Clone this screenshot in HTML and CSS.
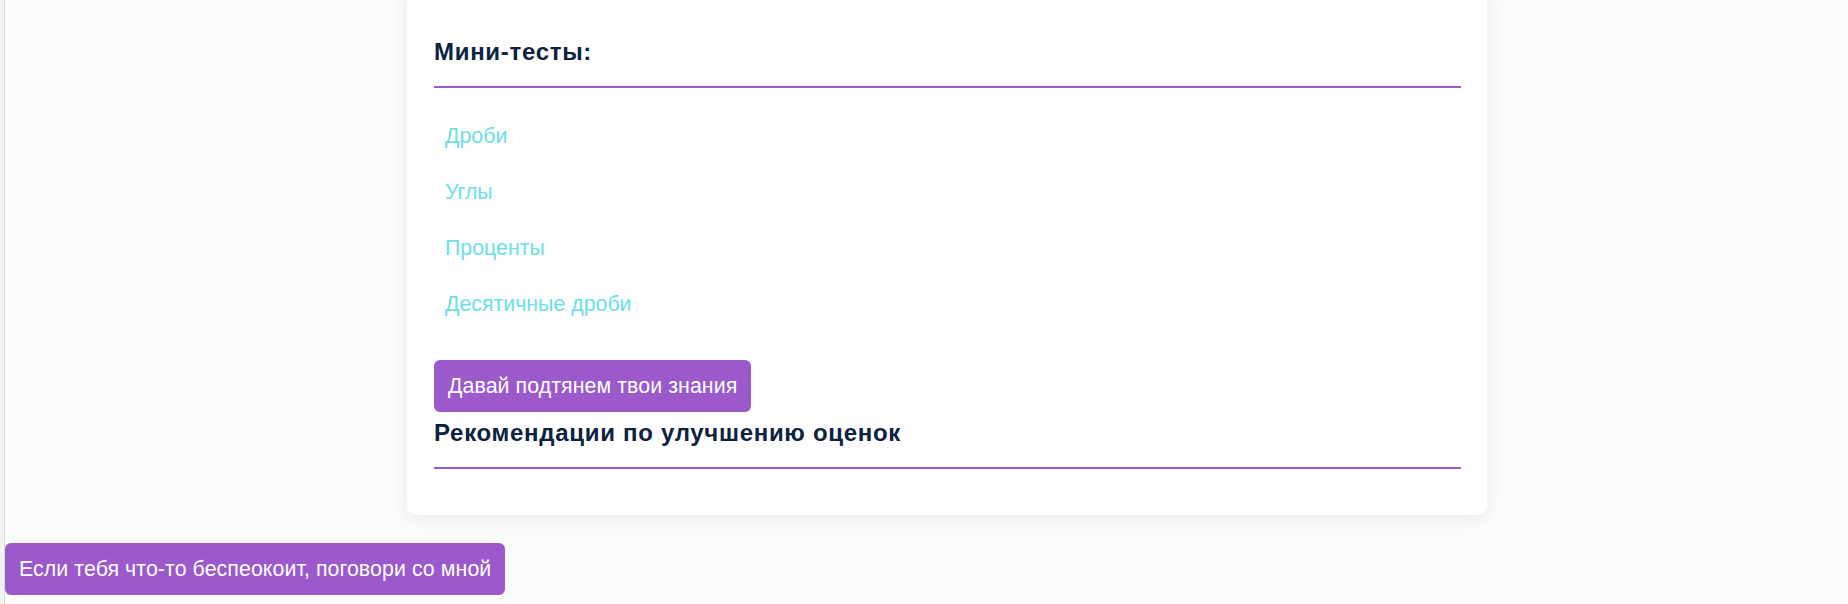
FILE: index.html
```html
<!DOCTYPE html>
<html lang="ru">
<head>
<meta charset="utf-8">
<title>Мини-тесты</title>
<link rel="stylesheet" href="styles.css">
</head>
<body>
<div class="layout">
  <aside class="rail"></aside>
  <main class="main">
    <section class="card">
      <h2 class="section-title">Мини-тесты:</h2>
      <ul class="tests">
        <li><a class="test-link" href="#">Дроби</a></li>
        <li><a class="test-link" href="#">Углы</a></li>
        <li><a class="test-link" href="#">Проценты</a></li>
        <li><a class="test-link" href="#">Десятичные дроби</a></li>
      </ul>
      <button class="btn" type="button">Давай подтянем твои знания</button>
      <h2 class="section-title">Рекомендации по улучшению оценок</h2>
    </section>
    <button class="btn talk" type="button">Если тебя что-то беспеокоит, поговори со мной</button>
  </main>
</div>
</body>
</html>
```

FILE: styles.css
```css
* { box-sizing: border-box; }
html, body { margin: 0; padding: 0; }
body {
  background: #fafcf9;
  font-family: "Liberation Sans", Arial, sans-serif;
  height: 604px;
  overflow: hidden;
}
.layout {
  display: flex;
  min-height: 604px;
}
.rail {
  width: 5px;
  flex: none;
  background: #f2f3f2;
  border-right: 1px solid #dcdedc;
}
.main {
  flex: 1;
  display: flex;
  flex-direction: column;
  align-items: flex-start;
}
.card {
  width: 1080px;
  margin: -20px 0 0 402px;
  padding: 58px 26px 46px 27px;
  background: #ffffff;
  border-radius: 10px;
  box-shadow: 0 4px 18px rgba(0, 0, 0, 0.07);
}
.section-title {
  margin: 0;
  font-size: 24px;
  line-height: 28.8px;
  font-weight: 700;
  letter-spacing: 0.7px;
  color: #0b2240;
  padding-bottom: 19px;
  border-bottom: 2px solid #9b59cc;
}
.tests {
  list-style: none;
  margin: 20px 0 28px;
  padding: 0;
}
.tests li {
  padding: 12px 0 12px 11px;
}
.test-link {
  font-size: 21.33px;
  line-height: 32px;
  color: #6ce0ea;
  text-decoration: none;
}
.btn {
  display: block;
  font-family: "Liberation Sans", Arial, sans-serif;
  font-size: 21.33px;
  line-height: 24.5px;
  letter-spacing: 0.08px;
  color: #ffffff;
  background: #9b59cc;
  border: none;
  border-radius: 6px;
  padding: 14px 14px 13.5px;
  cursor: pointer;
}
.card .btn { margin-bottom: 7.6px; }
.talk {
  margin-top: 28px;
}
```
